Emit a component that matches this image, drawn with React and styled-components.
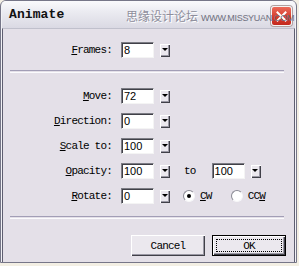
import React from "react";
import styled, { createGlobalStyle } from "styled-components";

const Global = createGlobalStyle`
  html, body {
    margin: 0;
    padding: 0;
    background: #f3efe4;
  }
`;

const Window = styled.div`
  width: 297px;
  height: 263px;
  box-sizing: border-box;
  border: 1px solid #767688;
  border-radius: 6px 6px 0 0;
  background: #f2f2f6;
  padding: 0 1px 1px;
  display: flex;
  flex-direction: column;
  position: relative;
  overflow: hidden;
`;

const TitleBar = styled.div`
  height: 27px;
  flex: none;
  display: flex;
  align-items: center;
  padding-left: 7px;
  background: linear-gradient(#fafafc, #ebebf1 40%, #dad9e3);
  position: relative;
`;

const Title = styled.span`
  font-family: "Liberation Mono", monospace;
  font-weight: bold;
  font-size: 13px;
  color: #111;
  letter-spacing: 0.1px;
`;

const Watermark = styled.div`
  position: absolute;
  left: 124px;
  top: 6px;
  display: flex;
  align-items: baseline;
  gap: 3px;
  white-space: nowrap;
  z-index: 3;
  pointer-events: none;
`;

const WaterCn = styled.span`
  font-family: "Noto Sans CJK SC", sans-serif;
  font-size: 12px;
  color: #8e8e9c;
  text-shadow: 1px 1px 0 #fff;
`;

const WaterEn = styled.span`
  font-family: "Liberation Sans", sans-serif;
  font-size: 9px;
  color: #707080;
  letter-spacing: -0.3px;
`;

const CloseButton = styled.div`
  position: absolute;
  right: 3px;
  top: 5px;
  z-index: 1;
  width: 21px;
  height: 20px;
  box-sizing: border-box;
  border-radius: 3px;
  border: 1px solid #f4f4f4;
  background: linear-gradient(#ec6a5a, #d23a2a 60%, #c42a20);
  box-shadow: 0 0 0 1px #b0a0a0;
  display: flex;
  align-items: center;
  justify-content: center;
`;

const Body = styled.div`
  flex: 1;
  border: 1px solid #5e5e70;
  border-top-color: #c0c0cc;
  background: #e4e0e8;
  display: flex;
  flex-direction: column;
  padding: 13px 0 7px;
`;

const Row = styled.div`
  display: flex;
  align-items: center;
  height: 16px;
`;

const Fields = styled.div`
  display: flex;
  flex-direction: column;
  gap: 9px;
  margin-top: 15px;
`;

const Label = styled.label`
  width: 109px;
  text-align: right;
  font-family: "Liberation Mono", monospace;
  font-size: 11px;
  letter-spacing: -0.8px;
  color: #000;
  margin-right: 9px;
  white-space: nowrap;
`;

const Combo = styled.div`
  display: flex;
  align-items: center;
  gap: 6px;
  margin-left: ${(p) => p.$offset || 0}px;
`;

const Field = styled.div`
  width: 33px;
  height: 16px;
  box-sizing: border-box;
  background: #fff;
  border-top: 1px solid #7c7c84;
  border-left: 1px solid #7c7c84;
  border-right: 1px solid #f4f4f4;
  border-bottom: 1px solid #f4f4f4;
  box-shadow: inset 1px 1px 0 #404048;
  font-family: "Liberation Sans", sans-serif;
  font-size: 11px;
  line-height: 14px;
  padding-left: 2px;
  color: #000;
`;

const DropButton = styled.div`
  width: 10px;
  height: 13px;
  box-sizing: border-box;
  background: #ebe8ee;
  box-shadow: inset 1px 1px 0 #fff, inset -1px -1px 0 #404048,
    inset -2px -2px 0 #9a98a4;
  display: flex;
  align-items: center;
  justify-content: center;
  &::after {
    content: "";
    margin: 0 1px 1px 0;
    border-left: 3px solid transparent;
    border-right: 3px solid transparent;
    border-top: 3px solid #000;
  }
`;

const Word = styled.span`
  font-family: "Liberation Mono", monospace;
  font-size: 11px;
  letter-spacing: -0.8px;
  color: #000;
  margin-left: ${(p) => p.$left || 0}px;
`;

const Radio = styled.span`
  width: 12px;
  height: 12px;
  box-sizing: border-box;
  border-radius: 50%;
  background: #fff;
  border: 1px solid;
  border-color: #8a8a94 #f6f6f8 #f6f6f8 #8a8a94;
  display: flex;
  align-items: center;
  justify-content: center;
  margin-left: ${(p) => p.$left || 0}px;
  &::after {
    content: "";
    width: 4px;
    height: 4px;
    border-radius: 50%;
    background: ${(p) => (p.$checked ? "#000" : "transparent")};
  }
`;

const Separator = styled.div`
  height: 1px;
  border-top: 1px solid #a29eb6;
  border-bottom: 1px solid #fbfbfd;
  margin: ${(p) => p.$top}px 10px 0 7px;
`;

const Buttons = styled.div`
  display: flex;
  justify-content: flex-end;
  gap: 7px;
  padding-right: 8px;
  margin-top: 16px;
`;

const Button = styled.div`
  width: 74px;
  height: 21px;
  box-sizing: border-box;
  background: #ebe8ee;
  border: ${(p) => (p.$default ? "1px solid #000" : "none")};
  box-shadow: inset 1px 1px 0 #fff, inset -1px -1px 0 #404048,
    inset -2px -2px 0 #9a98a4;
  display: flex;
  align-items: center;
  justify-content: center;
  font-family: "Liberation Mono", monospace;
  font-size: 11px;
  letter-spacing: -0.8px;
  color: #000;
  position: relative;
`;

const Focus = styled.span`
  position: absolute;
  left: 3px;
  right: 3px;
  top: 3px;
  bottom: 3px;
  border: 1px dotted #000;
`;

const ComboField = ({ value, offset }) => (
  <Combo $offset={offset}>
    <Field>{value}</Field>
    <DropButton />
  </Combo>
);

const FieldRow = ({ hot, rest, value, children }) => (
  <Row>
    <Label>
      <u>{hot}</u>
      {rest}
    </Label>
    <ComboField value={value} />
    {children}
  </Row>
);

export default function App() {
  return (
    <>
      <Global />
      <Window>
        <TitleBar>
          <Title>Animate</Title>
          <CloseButton>
            <svg width="11" height="11" viewBox="0 0 11 11">
              <path
                d="M1.5 1.5 L9.5 9.5 M9.5 1.5 L1.5 9.5"
                stroke="#fff"
                strokeWidth="2"
                strokeLinecap="square"
              />
            </svg>
          </CloseButton>
          <Watermark>
            <WaterCn>思缘设计论坛</WaterCn>
            <WaterEn>WWW.MISSYUAN.COM</WaterEn>
          </Watermark>
        </TitleBar>
        <Body>
          <FieldRow hot="F" rest="rames:" value="8" />
          <Separator $top={12} />
          <Fields>
            <FieldRow hot="M" rest="ove:" value="72" />
            <FieldRow hot="D" rest="irection:" value="0" />
            <FieldRow hot="S" rest="cale to:" value="100" />
            <FieldRow hot="O" rest="pacity:" value="100">
              <Word $left={14}>to</Word>
              <ComboField value="100" offset={16} />
            </FieldRow>
            <FieldRow hot="R" rest="otate:" value="0">
              <Radio $left={13} $checked />
              <Word $left={5}>
                <u>C</u>W
              </Word>
              <Radio $left={19} />
              <Word $left={5}>
                CC<u>W</u>
              </Word>
            </FieldRow>
          </Fields>
          <Separator $top={12} />
          <Buttons>
            <Button>Cancel</Button>
            <Button $default>
              <Focus />
              OK
            </Button>
          </Buttons>
        </Body>
      </Window>
    </>
  );
}
